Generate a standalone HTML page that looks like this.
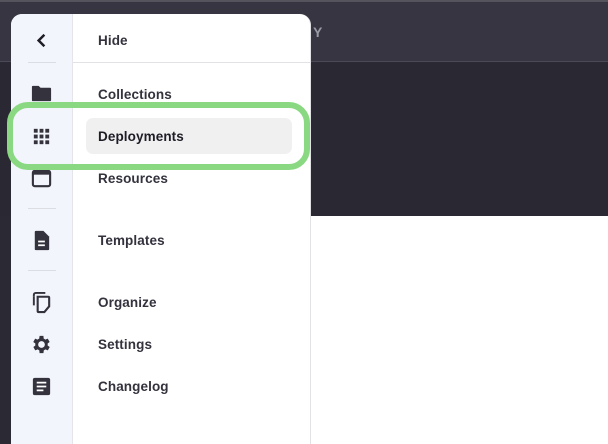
<!DOCTYPE html>
<html><head><style>
*{margin:0;padding:0;box-sizing:border-box}
html,body{width:608px;height:444px;overflow:hidden}
body{background:#2b2a34;position:relative;font-family:"Liberation Sans",sans-serif}
.top{position:absolute;left:0;top:0;width:608px;height:2px;background:#55545c}
.hdr{position:absolute;left:0;top:2px;width:608px;height:60px;background:#363541;border-bottom:1px solid #4a4956}
.dark{position:absolute;left:0;top:63px;width:608px;height:153px;background:#2a2933}
.white{position:absolute;left:310px;top:216px;width:298px;height:228px;background:#fff}
.Y{position:absolute;left:313px;top:24px;color:#9a9aa6;font-weight:bold;font-size:14px}
.panel{position:absolute;left:11px;top:14px;width:300px;height:430px;background:#fff;border-radius:11px 11px 0 0;overflow:hidden;border-right:1px solid #e2e2e6}
.rail{position:absolute;left:0;top:0;width:62px;height:100%;background:#f3f5fc;border-right:1px solid #e4e4ea}
.dv{position:absolute;height:1px;background:#dcdde3}
.it{position:absolute;left:87px;font-size:13.5px;font-weight:bold;color:#33323d;letter-spacing:0.1px}
.ic{position:absolute;left:19px;width:23px;height:23px}
.hl{position:absolute;left:75px;top:104px;width:206px;height:36px;background:#f0f0f0;border-radius:7px}
.ring{position:absolute;left:7px;top:102px;width:303px;height:68px;border:6px solid #8ad982;border-radius:21px}
</style></head><body>
<div class="top"></div><div class="hdr"></div><div class="dark"></div><div class="white"></div>
<div class="Y">Y</div>
<div class="panel">
 <div class="rail"></div>
 <div class="dv" style="left:62px;top:48px;width:238px;background:#e2e2e6"></div>
 <div class="dv" style="left:17px;top:48px;width:28px"></div>
 <div class="dv" style="left:17px;top:194px;width:28px"></div>
 <div class="dv" style="left:17px;top:256px;width:28px"></div>
 <div class="hl"></div>
 <div class="it" style="top:19px">Hide</div>
 <div class="it" style="top:73px">Collections</div>
 <div class="it" style="top:115px;color:#1e1d26">Deployments</div>
 <div class="it" style="top:157px">Resources</div>
 <div class="it" style="top:219px">Templates</div>
 <div class="it" style="top:281px">Organize</div>
 <div class="it" style="top:323px">Settings</div>
 <div class="it" style="top:365px">Changelog</div>
 <svg class="ic" style="top:15px" viewBox="0 0 24 24"><path d="M15 6l-6 6 6 6" fill="none" stroke="#1f1e26" stroke-width="2.6"/></svg>
 <svg class="ic" style="top:68px" viewBox="0 0 24 24"><path d="M2 5a1 1 0 0 1 1-1h6l2 2h10a1 1 0 0 1 1 1v12a1 1 0 0 1-1 1H3a1 1 0 0 1-1-1z" fill="#33323d"/></svg>
 <svg class="ic" style="top:111px" viewBox="0 0 24 24" fill="#33323d"><rect x="4" y="4" width="4" height="4"/><rect x="10" y="4" width="4" height="4"/><rect x="16" y="4" width="4" height="4"/><rect x="4" y="10" width="4" height="4"/><rect x="10" y="10" width="4" height="4"/><rect x="16" y="10" width="4" height="4"/><rect x="4" y="16" width="4" height="4"/><rect x="10" y="16" width="4" height="4"/><rect x="16" y="16" width="4" height="4"/></svg>
 <svg class="ic" style="top:153px" viewBox="0 0 24 24"><rect x="3" y="4" width="18" height="16" rx="2" fill="none" stroke="#33323d" stroke-width="2.2"/><rect x="3" y="4" width="18" height="4" fill="#33323d"/></svg>
 <svg class="ic" style="top:215px" viewBox="0 0 24 24"><path d="M6 2h8l6 6v13a1 1 0 0 1-1 1H6a1 1 0 0 1-1-1V3a1 1 0 0 1 1-1z" fill="#33323d"/><path d="M8.5 13h7M8.5 17h7" stroke="#fff" stroke-width="1.8"/></svg>
 <svg class="ic" style="top:277px" viewBox="0 0 24 24"><path d="M4 6V4a2 2 0 0 1 2-2h10" fill="none" stroke="#33323d" stroke-width="2"/><path d="M8 6h11a1 1 0 0 1 1 1v9l-5 6H9a1 1 0 0 1-1-1z" fill="none" stroke="#33323d" stroke-width="2.2"/><path d="M4 6v9" stroke="#33323d" stroke-width="2"/></svg>
 <svg class="ic" style="top:319px" viewBox="0 0 24 24"><path fill="#33323d" d="M19.4 13a7.6 7.6 0 0 0 0-2l2.1-1.6-2-3.5-2.5 1a7 7 0 0 0-1.7-1L15 3h-4l-.4 2.9a7 7 0 0 0-1.7 1l-2.5-1-2 3.5L6.6 11a7.6 7.6 0 0 0 0 2l-2.1 1.6 2 3.5 2.5-1a7 7 0 0 0 1.7 1L11 21h4l.4-2.9a7 7 0 0 0 1.7-1l2.5 1 2-3.5zM13 15.5a3.5 3.5 0 1 1 0-7 3.5 3.5 0 0 1 0 7z" transform="translate(-1 0)"/></svg>
 <svg class="ic" style="top:361px" viewBox="0 0 24 24"><rect x="3" y="3" width="18" height="18" rx="2" fill="#33323d"/><path d="M7 8h10M7 12h10M7 16h7" stroke="#fff" stroke-width="1.8"/></svg>
</div>
<div class="ring"></div>
</body></html>
